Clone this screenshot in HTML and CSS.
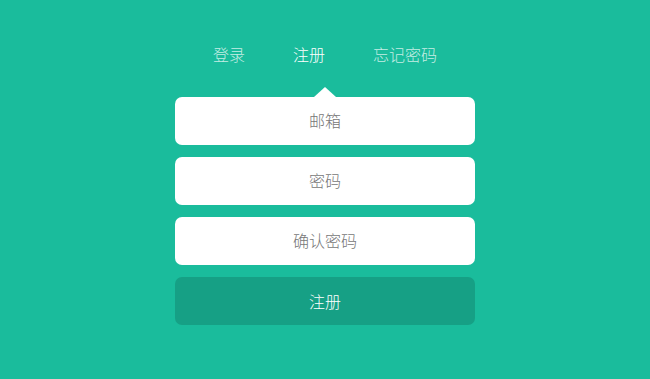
FILE: index.html
```html
<!DOCTYPE html>
<html lang="zh-CN">
<head>
<meta charset="utf-8">
<title>注册</title>
<link rel="stylesheet" href="styles.css">
</head>
<body>
<div class="page">
  <nav class="nav">
    <a class="nav-item">登录</a>
    <a class="nav-item active">注册</a>
    <a class="nav-item">忘记密码</a>
  </nav>
  <form class="form">
    <input class="field" type="text" placeholder="邮箱">
    <input class="field" type="password" placeholder="密码">
    <input class="field" type="password" placeholder="确认密码">
    <button class="submit" type="button">注册</button>
  </form>
</div>
</body>
</html>
```
FILE: styles.css
```css
html, body {
  margin: 0;
  padding: 0;
  height: 100%;
  background: #1abc9c;
}
body {
  font-family: "Noto Sans CJK SC", "Noto Sans", sans-serif;
  font-weight: 300;
}
.page {
  padding-top: 44px;
  display: flex;
  flex-direction: column;
  align-items: center;
}
.nav {
  display: flex;
  gap: 48px;
  font-size: 16px;
  line-height: 20px;
  height: 20px;
  margin-bottom: 33px;
}
.nav-item {
  color: rgba(255, 255, 255, 0.75);
  cursor: pointer;
}
.nav-item.active {
  color: #ffffff;
}
.form {
  position: relative;
  margin: 0;
  width: 300px;
  display: flex;
  flex-direction: column;
  gap: 12px;
}
.form::before {
  content: "";
  position: absolute;
  top: -10px;
  left: 50%;
  margin-left: -11px;
  border-left: 11px solid transparent;
  border-right: 11px solid transparent;
  border-bottom: 10px solid #ffffff;
}
.field, .submit {
  box-sizing: border-box;
  width: 300px;
  height: 48px;
  margin: 0;
  border: none;
  border-radius: 7px;
  font-family: inherit;
  font-weight: 300;
  font-size: 16px;
  line-height: 48px;
  text-align: center;
  outline: none;
  padding: 0 0 2px;
}
.field {
  background: #ffffff;
  color: #777777;
}
.field::placeholder {
  color: #777777;
  opacity: 1;
}
.submit {
  background: #16a085;
  color: #ffffff;
  cursor: pointer;
}
```
